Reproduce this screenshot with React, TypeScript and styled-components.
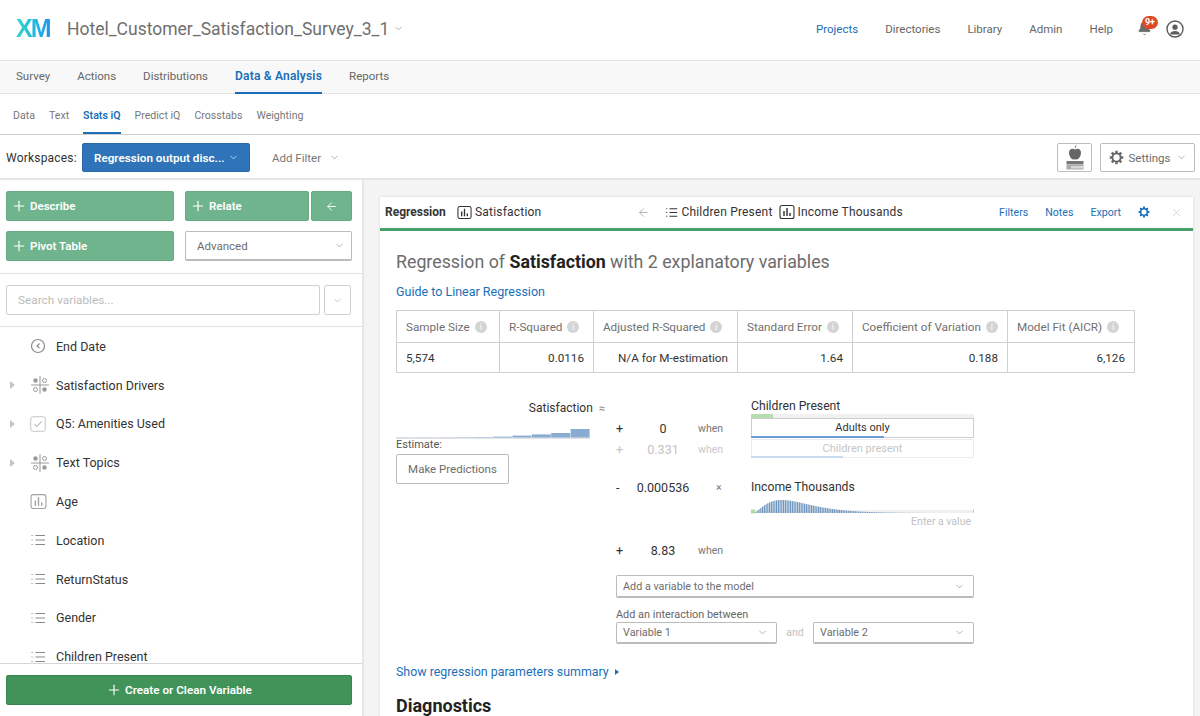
import styled, { createGlobalStyle } from 'styled-components';
import { ChevronDown, Plus, X, ArrowLeft, Bell } from 'lucide-react';

const GlobalStyle = createGlobalStyle`
  html, body { margin: 0; height: 100%; overflow: hidden; background: #fff; }
  body { font-family: Roboto, "Liberation Sans", sans-serif; font-size: 12px; color: #3a3a3a; }
  * { box-sizing: border-box; }
`;

const Page = styled.div`
  width: 1200px;
  height: 716px;
  display: flex;
  flex-direction: column;
  overflow: hidden;
`;

const TopBar = styled.header`
  height: 60px;
  flex: none;
  display: flex;
  align-items: center;
  padding: 0 16px 3px;
`;

const Logo = styled.span`
  font-family: "Liberation Sans", sans-serif;
  font-weight: 700;
  font-size: 25px;
  letter-spacing: -1.8px;
  width: 51px;
  background: linear-gradient(100deg, #33dcc4 0%, #22a9e8 50%, #1b62dc 100%);
  -webkit-background-clip: text;
  background-clip: text;
  color: transparent;
`;

const SurveyTitle = styled.span`
  font-size: 17.5px;
  color: #6f6f6f;
  display: flex;
  align-items: center;
  gap: 4px;
`;

const TopNav = styled.nav`
  margin-left: auto;
  display: flex;
  align-items: center;
  gap: 27px;
`;

const TopLink = styled.a<{ $active?: boolean }>`
  font-size: 11.5px;
  color: ${(p) => (p.$active ? '#1a6fb8' : '#666')};
`;

const BellWrap = styled.span`
  position: relative;
  display: block;
  width: 16px;
  height: 16px;
  color: #6b6b6b;
`;

const Badge = styled.span`
  position: absolute;
  left: 5px;
  top: -5px;
  width: 16px;
  height: 13px;
  border-radius: 7px;
  background: #dd4b26;
  color: #fff;
  font-size: 9px;
  font-weight: 700;
  line-height: 13px;
  text-align: center;
`;

const UserGroup = styled.div`
  display: flex;
  align-items: center;
  gap: 13px;
  margin-left: -3px;
`;

const MainTabs = styled.nav`
  height: 34px;
  flex: none;
  display: flex;
  gap: 27px;
  padding: 0 16px;
  background: #f8f8f8;
  border-top: 1px solid #e4e4e4;
  border-bottom: 1px solid #e4e4e4;
`;

const MainTab = styled.a<{ $active?: boolean }>`
  line-height: 31px;
  height: 33px;
  font-size: ${(p) => (p.$active ? '12px' : '11.5px')};
  letter-spacing: ${(p) => (p.$active ? '0.2px' : '0')};
  color: ${(p) => (p.$active ? '#1a6fb8' : '#666')};
  font-weight: ${(p) => (p.$active ? 600 : 400)};
  border-bottom: 2px solid ${(p) => (p.$active ? '#1a6fb8' : 'transparent')};
`;

const SubTabs = styled.nav`
  height: 41px;
  flex: none;
  display: flex;
  gap: 14px;
  padding: 0 13px;
  border-bottom: 1px solid #cfcfcf;
`;

const SubTab = styled.a<{ $active?: boolean }>`
  font-size: 10.6px;
  line-height: 44px;
  height: 40px;
  color: ${(p) => (p.$active ? '#1a6fb8' : '#777')};
  font-weight: ${(p) => (p.$active ? 600 : 400)};
  border-bottom: 2px solid ${(p) => (p.$active ? '#1a6fb8' : 'transparent')};
`;

const Toolbar = styled.div`
  height: 45px;
  flex: none;
  display: flex;
  align-items: center;
  padding: 2px 5px 0 6px;
  border-bottom: 2px solid #e6e6e6;
`;

const WorkspaceLabel = styled.span`
  color: #333;
  width: 76px;
  letter-spacing: 0.2px;
`;

const WorkspaceButton = styled.button`
  width: 168px;
  height: 29px;
  border: 1px solid #2a69a8;
  border-radius: 2px;
  background: #2f74b8;
  color: #fff;
  font: 600 11.7px Roboto, sans-serif;
  white-space: nowrap;
  display: flex;
  align-items: center;
  justify-content: space-between;
  padding: 0 10px 0 11px;
`;

const FilterLink = styled.span`
  margin-left: 22px;
  font-size: 11.5px;
  color: #777;
  display: flex;
  align-items: center;
  gap: 8px;
`;

const ToolbarRight = styled.div`
  margin-left: auto;
  display: flex;
  gap: 8px;
`;

const OutlineButton = styled.button<{ $width: number }>`
  width: ${(p) => p.$width}px;
  height: 29px;
  border: 1px solid #bdbdbd;
  border-radius: 2px;
  background: #fff;
  color: #6c6c6c;
  font: 400 11.5px Roboto, sans-serif;
  display: flex;
  align-items: center;
  justify-content: center;
  gap: 5px;
  padding: 0;
`;

const Body = styled.div`
  flex: 1;
  min-height: 0;
  display: flex;
`;

const Sidebar = styled.aside`
  width: 364px;
  flex: none;
  display: flex;
  flex-direction: column;
  border-right: 2px solid #e6e6e6;
`;

const ToolGrid = styled.div`
  display: grid;
  grid-template-columns: 168px 167px;
  grid-auto-rows: 30px;
  gap: 10px 11px;
  padding: 11px 6px 12px;
  border-bottom: 1px solid #e2e2e2;
`;

const GreenButton = styled.button`
  background: #70b48d;
  border: 1px solid #65ab83;
  border-radius: 2px;
  color: #fff;
  font: 600 11.5px Roboto, sans-serif;
  display: flex;
  align-items: center;
  gap: 3px;
  padding: 0 0 0 4px;
  min-width: 0;
`;

const RelateGroup = styled.div`
  display: grid;
  grid-template-columns: 124px 1fr;
  gap: 2px;
`;

const ArrowButton = styled(GreenButton)`
  justify-content: center;
  padding: 0;
`;

const SelectBox = styled.div`
  height: 100%;
  border: 1px solid #bcbcbc;
  border-bottom-width: 2px;
  border-radius: 2px;
  background: #fff;
  color: #6d6d6d;
  font-size: 11.5px;
  display: flex;
  align-items: center;
  justify-content: space-between;
  padding: 0 6px 0 11px;
`;

const SearchRow = styled.div`
  display: flex;
  gap: 4px;
  height: 53px;
  padding: 11px 11px 11px 6px;
  border-bottom: 1px solid #e2e2e2;
`;

const SearchInput = styled.div`
  flex: 1;
  border: 1px solid #cfcfcf;
  border-radius: 2px;
  color: #bcbcbc;
  font-size: 11.8px;
  line-height: 29px;
  padding-left: 11px;
`;

const SearchToggle = styled.div`
  width: 27px;
  border: 1px solid #cfcfcf;
  border-radius: 2px;
  color: #aaa;
  display: flex;
  align-items: center;
  justify-content: center;
`;

const VariableList = styled.ul`
  flex: 1;
  min-height: 0;
  overflow: hidden;
  list-style: none;
  margin: 0;
  padding: 0;
  border-bottom: 1px solid #d6d6d6;
`;

const VariableRow = styled.li`
  height: 38.8px;
  display: grid;
  grid-template-columns: 30px 26px 1fr;
  align-items: center;
  color: #333;
  font-size: 12.5px;
`;

const Caret = styled.span`
  justify-self: center;
  margin-left: -6px;
  width: 0;
  height: 0;
  border-left: 5px solid #c4c4c4;
  border-top: 4px solid transparent;
  border-bottom: 4px solid transparent;
`;

const IconSlot = styled.span`
  display: flex;
  align-items: center;
  color: #8a8a8a;
`;

const SidebarFooter = styled.div`
  flex: none;
  height: 52px;
  padding: 11px 10px 0 6px;
`;

const CreateButton = styled.button`
  width: 346px;
  height: 30px;
  background: #41935a;
  border: 1px solid #398550;
  border-radius: 2px;
  color: #fff;
  font: 600 11.7px Roboto, sans-serif;
  display: flex;
  align-items: center;
  justify-content: center;
  gap: 3px;
`;

const Workspace = styled.main`
  flex: 1;
  min-width: 0;
  background: #f4f4f4;
  padding: 17px 7px 0 16px;
`;

const Card = styled.section`
  background: #fff;
  height: 620px;
  box-shadow: 0 0 3px rgba(0, 0, 0, 0.12);
`;

const CardHeader = styled.div`
  height: 34px;
  display: flex;
  align-items: center;
  padding: 0 10px 1px 5px;
  border-bottom: 3px solid #4a9e68;
  color: #333;
  letter-spacing: 0.2px;
`;

const CardType = styled.strong`
  font-weight: 700;
  font-size: 12px;
  letter-spacing: 0;
  width: 72px;
`;

const Chip = styled.span`
  display: flex;
  align-items: center;
  gap: 3px;
  margin-right: 6px;
`;

const BackArrow = styled.span`
  color: #777;
  display: flex;
  margin: 0 15px 0 90px;
`;

const CardActions = styled.div`
  margin-left: auto;
  display: flex;
  align-items: center;
  gap: 17px;
  color: #1a6fb8;
  font-size: 10.6px;
  letter-spacing: 0;
`;

const CloseIcon = styled.span`
  color: #c9c9c9;
  display: flex;
  margin-left: 3px;
`;

const CardBody = styled.div`
  padding: 20px 16px 0;
`;

const ResultTitle = styled.h2`
  margin: 0;
  font-size: 17.8px;
  font-weight: 400;
  line-height: 22px;
  color: #6c6c6c;
  strong { color: #222; font-weight: 700; }
`;

const BlueLink = styled.a`
  display: block;
  color: #1a6fb8;
  font-size: 12.5px;
  line-height: 16px;
`;

const GuideLink = styled(BlueLink)`
  margin-top: 11px;
`;

const StatsTable = styled.table`
  margin-top: 10px;
  border-collapse: collapse;
  table-layout: fixed;
  width: 739px;
  th, td { border: 1px solid #cfcfcf; padding: 0 9px; font-size: 11.7px; white-space: nowrap; }
  th { height: 32px; font-weight: 400; color: #707070; text-align: left; }
  td { height: 30px; color: #333; text-align: right; }
  td:first-child { text-align: left; }
`;

const InfoDot = styled.span`
  display: inline-block;
  width: 12px;
  height: 12px;
  margin-left: 5px;
  border-radius: 50%;
  background: #d4d4d4;
  color: #fff;
  font-size: 9px;
  line-height: 12px;
  text-align: center;
  vertical-align: 1px;
`;

const Equation = styled.div`
  display: flex;
  margin-top: 25px;
`;

const OutcomeColumn = styled.div`
  width: 220px;
  flex: none;
  padding-top: 3px;
`;

const OutcomeLabel = styled.div`
  display: flex;
  justify-content: flex-end;
  align-items: center;
  gap: 6px;
  width: 209px;
  line-height: 15px;
  color: #333;
  span { color: #888; font-size: 11px; }
`;

const EstimateLabel = styled.div`
  font-size: 11px;
  line-height: 11px;
  color: #555;
`;

const PredictButton = styled(OutlineButton)`
  height: 30px;
  margin-top: 4px;
  border-color: #bbb;
`;

const ModelColumn = styled.div`
  width: 358px;
  flex: none;
`;

const TermGrid = styled.div`
  display: grid;
  grid-template-columns: 18px 58px 59px 223px;
  grid-template-rows: 20px 21px 20px 18px 20px 19px 24px 20px;
  align-items: center;
`;

const TermSign = styled.span<{ $faded?: boolean }>`
  grid-column: 1;
  font-size: 12.5px;
  color: ${(p) => (p.$faded ? '#c4c4c4' : '#333')};
`;

const TermValue = styled.span<{ $faded?: boolean }>`
  grid-column: 2;
  text-align: center;
  font-size: 12.5px;
  color: ${(p) => (p.$faded ? '#c4c4c4' : '#333')};
`;

const TermWhen = styled.span<{ $faded?: boolean }>`
  grid-column: 3;
  padding-left: 6px;
  font-size: 10.5px;
  color: ${(p) => (p.$faded ? '#c8c8c8' : '#777')};
`;

const Times = styled(TermWhen)`
  padding-left: 24px;
`;

const VarTitle = styled.div`
  grid-column: 4;
  color: #333;
  font-size: 12.2px;
  line-height: 15px;
`;

const PresentHead = styled.div`
  grid-column: 4;
  align-self: stretch;
  display: flex;
  flex-direction: column;
  justify-content: flex-end;
`;

const LevelStrip = styled.div`
  height: 4px;
  background: #f1f1f1;
  div { height: 100%; width: 22px; background: #b7dcae; }
`;

const LevelBox = styled.div<{ $faded?: boolean }>`
  grid-column: 4;
  align-self: stretch;
  position: relative;
  margin-bottom: 1px;
  border: 1px solid ${(p) => (p.$faded ? '#ececec' : '#cdcdcd')};
  color: ${(p) => (p.$faded ? '#c6c6c6' : '#333')};
  font-size: 11px;
  line-height: 18px;
  text-align: center;
`;

const LevelBar = styled.span<{ $faded?: boolean }>`
  position: absolute;
  left: -1px;
  bottom: -1px;
  height: 2px;
  background: ${(p) => (p.$faded ? '#c9dbee' : '#6b9fd4')};
`;

const EnterValue = styled.div`
  grid-column: 4;
  align-self: start;
  line-height: 11px;
  text-align: right;
  padding-right: 3px;
  color: #c2c2c2;
  font-size: 10.5px;
`;

const AddVariable = styled.div`
  height: 23px;
  margin-top: 15px;
`;

const InteractionLabel = styled.div`
  margin-top: 10px;
  font-size: 10.9px;
  line-height: 13px;
  color: #666;
`;

const InteractionRow = styled.div`
  display: grid;
  grid-template-columns: 161px 36px 161px;
  height: 22px;
  margin-top: 1px;
`;

const AndLabel = styled.span`
  text-align: center;
  line-height: 22px;
  color: #c0c0c0;
  font-size: 10.5px;
`;

const SmallSelect = styled(SelectBox)`
  padding: 0 8px 0 6px;
  font-size: 10.8px;
`;

const SummaryLink = styled(BlueLink)`
  margin-top: 20px;
  font-size: 12.4px;
  display: flex;
  align-items: center;
  gap: 6px;
`;

const SummaryCaret = styled.span`
  width: 0;
  height: 0;
  border-left: 4px solid #1a6fb8;
  border-top: 3px solid transparent;
  border-bottom: 3px solid transparent;
`;

const SectionTitle = styled.h3`
  margin: 16px 0 0;
  font-size: 18px;
  line-height: 20px;
  font-weight: 700;
  color: #222;
`;

function Chevron({ size = 11, color = 'currentColor' }: { size?: number; color?: string }) {
  return <ChevronDown size={size} color={color} strokeWidth={1.4} />;
}

function ListIcon({ size = 16, color = '#8a8a8a', weight = 1.1 }) {
  return (
    <svg width={size} height={size} viewBox="0 0 16 16" fill="none" stroke={color} strokeWidth={weight}>
      <path d="M5.5 3.5H15M5.5 8H15M5.5 12.5H15" />
      <path d="M1.5 3.5h2M1.5 8h2M1.5 12.5h2" strokeDasharray="1 0.8" />
    </svg>
  );
}

function BarsIcon({ color = '#8a8a8a', size = 17, weight = 1 }) {
  return (
    <svg width={size} height={size} viewBox="0 0 16 16" fill="none" stroke={color} strokeWidth={weight}>
      <rect x="1" y="1.5" width="14" height="13" rx="2" />
      <path d="M5 12V7M8 12V4M11 12V9" strokeWidth={weight * 1.3} />
    </svg>
  );
}

function ClockIcon() {
  return (
    <svg width="16" height="16" viewBox="0 0 16 16" fill="none" stroke="#8a8a8a" strokeWidth="1.2">
      <circle cx="8" cy="8" r="6.5" />
      <path d="M9.5 5.5 7 8l2.5 2" />
    </svg>
  );
}

function TopicIcon() {
  return (
    <svg width="20" height="20" viewBox="0 0 20 20" fill="none" stroke="#9a9a9a" strokeWidth="1">
      <path d="M10 1v18M1 10h18" />
      <circle cx="5.5" cy="5.5" r="2.2" fill="#9a9a9a" stroke="none" />
      <circle cx="14.5" cy="5.5" r="2" />
      <circle cx="5.5" cy="14.5" r="2" />
      <circle cx="14.5" cy="14.5" r="2.2" fill="#9a9a9a" stroke="none" />
    </svg>
  );
}

function CheckIcon() {
  return (
    <svg width="16" height="16" viewBox="0 0 16 16" fill="none" stroke="#9a9a9a" strokeWidth="1">
      <rect x="0.75" y="0.75" width="14.5" height="14.5" rx="2" stroke="#c4c4c4" />
      <path d="M4.5 8.2 7 10.5 11.5 5.5" />
    </svg>
  );
}

function Gear({ color, size }: { color: string; size: number }) {
  return (
    <svg width={size} height={size} viewBox="0 0 16 16" fill="none" stroke={color}>
      <circle cx="8" cy="8" r="4.4" strokeWidth="2" />
      {[0, 45, 90, 135, 180, 225, 270, 315].map((a) => (
        <path key={a} d="M8 0.8V3.4" strokeWidth="2.6" transform={`rotate(${a} 8 8)`} />
      ))}
    </svg>
  );
}

function UserIcon() {
  return (
    <svg width="18" height="18" viewBox="0 0 18 18" fill="none" stroke="#5c5c5c" strokeWidth="1.4">
      <circle cx="9" cy="9" r="8" />
      <circle cx="9" cy="7.2" r="2.6" fill="#5c5c5c" stroke="none" />
      <path d="M3.8 14.6c1-2.8 3-3.6 5.2-3.6s4.2.8 5.2 3.6z" fill="#5c5c5c" stroke="none" />
    </svg>
  );
}

function AppleBooks() {
  return (
    <svg width="18" height="26" viewBox="0 0 18 26">
      <path d="M9 3 10 0.5" stroke="#666" strokeWidth="0.9" fill="none" />
      <path d="M9 4.5C6 2.8 3 4.4 3 7.8c0 3.4 2.5 6.7 4.5 6.7.7 0 1-.3 1.500-.3s.8.3 1.500.3c2 0 4.500-3.300 4.500-6.700 0-3.400-3-5-6-3.300z" fill="#666" />
      <rect x="0.5" y="16" width="17" height="3.5" fill="#777" />
      <rect x="0.5" y="20" width="17" height="4.5" fill="#aaa" />
      <rect x="5" y="21" width="12.5" height="2.5" fill="#d8d8d8" />
    </svg>
  );
}

const outcomeBars = [0.3, 0.3, 0.3, 0.4, 0.5, 1, 2, 3.2, 4.6, 8.6];

function OutcomeHistogram() {
  return (
    <svg width="194" height="11" viewBox="0 0 194 11" style={{ display: 'block', marginTop: 12 }}>
      <rect x="0" y="9.6" width="194" height="1.4" fill="#e4e4e4" />
      {outcomeBars.map((h, i) => (
        <rect key={i} x={i * 19.4} y={9.6 - h} width="19" height={h} fill="#8aabd2" />
      ))}
    </svg>
  );
}

function IncomeHistogram() {
  const bars = Array.from({ length: 100 }, (_, i) => {
    const t = i + 1;
    const v = (t / 16) * Math.exp(1 - t / 16);
    return 13 * Math.pow(v, 1.5);
  });
  return (
    <svg width="223" height="15" viewBox="0 0 223 15" style={{ display: 'block', gridColumn: 4 }}>
      <rect x="0" y="11" width="223" height="3" fill="#f0f0f0" />
      {bars.map((h, i) => (
        <rect key={i} x={4 + i * 1.75} y={14 - h} width="1.2" height={h} fill="#6f94bd" />
      ))}
      <rect x="0" y="10.5" width="4" height="4" fill="#b2dbaa" />
      <rect x="222" y="10" width="1" height="4" fill="#ccc" />
    </svg>
  );
}

function Variable({ name, caret, icon }: { name: string; caret?: boolean; icon: React.ReactNode }) {
  return (
    <VariableRow>
      {caret ? <Caret /> : <span />}
      <IconSlot>{icon}</IconSlot>
      <span>{name}</span>
    </VariableRow>
  );
}

function Info() {
  return <InfoDot>i</InfoDot>;
}

export default function App() {
  return (
    <Page>
      <GlobalStyle />
      <TopBar>
        <Logo>XM</Logo>
        <SurveyTitle>
          Hotel_Customer_Satisfaction_Survey_3_1 <Chevron color="#888" />
        </SurveyTitle>
        <TopNav>
          <TopLink $active>Projects</TopLink>
          <TopLink>Directories</TopLink>
          <TopLink>Library</TopLink>
          <TopLink>Admin</TopLink>
          <TopLink>Help</TopLink>
          <UserGroup>
            <BellWrap>
              <Bell size={15} fill="currentColor" strokeWidth={1} />
              <Badge>9+</Badge>
            </BellWrap>
            <UserIcon />
          </UserGroup>
        </TopNav>
      </TopBar>

      <MainTabs>
        <MainTab>Survey</MainTab>
        <MainTab>Actions</MainTab>
        <MainTab>Distributions</MainTab>
        <MainTab $active>Data &amp; Analysis</MainTab>
        <MainTab>Reports</MainTab>
      </MainTabs>

      <SubTabs>
        <SubTab>Data</SubTab>
        <SubTab>Text</SubTab>
        <SubTab $active>Stats iQ</SubTab>
        <SubTab>Predict iQ</SubTab>
        <SubTab>Crosstabs</SubTab>
        <SubTab>Weighting</SubTab>
      </SubTabs>

      <Toolbar>
        <WorkspaceLabel>Workspaces:</WorkspaceLabel>
        <WorkspaceButton>
          Regression output disc... <Chevron color="#fff" />
        </WorkspaceButton>
        <FilterLink>
          Add Filter <Chevron color="#888" />
        </FilterLink>
        <ToolbarRight>
          <OutlineButton $width={35}>
            <AppleBooks />
          </OutlineButton>
          <OutlineButton $width={95}>
            <Gear color="#666" size={15} />
            Settings
            <Chevron color="#888" />
          </OutlineButton>
        </ToolbarRight>
      </Toolbar>

      <Body>
        <Sidebar>
          <ToolGrid>
            <GreenButton>
              <Plus size={16} strokeWidth={1.7} /> Describe
            </GreenButton>
            <RelateGroup>
              <GreenButton>
                <Plus size={16} strokeWidth={1.7} /> Relate
              </GreenButton>
              <ArrowButton>
                <ArrowLeft size={13} strokeWidth={1.7} />
              </ArrowButton>
            </RelateGroup>
            <GreenButton>
              <Plus size={16} strokeWidth={1.7} /> Pivot Table
            </GreenButton>
            <SelectBox>
              Advanced <Chevron color="#888" />
            </SelectBox>
          </ToolGrid>
          <SearchRow>
            <SearchInput>Search variables...</SearchInput>
            <SearchToggle>
              <Chevron />
            </SearchToggle>
          </SearchRow>
          <VariableList>
            <Variable name="End Date" icon={<ClockIcon />} />
            <Variable name="Satisfaction Drivers" caret icon={<TopicIcon />} />
            <Variable name="Q5: Amenities Used" caret icon={<CheckIcon />} />
            <Variable name="Text Topics" caret icon={<TopicIcon />} />
            <Variable name="Age" icon={<BarsIcon color="#a0a0a0" />} />
            <Variable name="Location" icon={<ListIcon />} />
            <Variable name="ReturnStatus" icon={<ListIcon />} />
            <Variable name="Gender" icon={<ListIcon />} />
            <Variable name="Children Present" icon={<ListIcon />} />
          </VariableList>
          <SidebarFooter>
            <CreateButton>
              <Plus size={16} strokeWidth={1.7} /> Create or Clean Variable
            </CreateButton>
          </SidebarFooter>
        </Sidebar>

        <Workspace>
          <Card>
            <CardHeader>
              <CardType>Regression</CardType>
              <Chip>
                <BarsIcon color="#333" size={15} weight={1.1} /> Satisfaction
              </Chip>
              <BackArrow>
                <ArrowLeft size={13} strokeWidth={1} />
              </BackArrow>
              <Chip>
                <ListIcon color="#333" size={13} weight={1.3} /> Children Present
              </Chip>
              <Chip>
                <BarsIcon color="#333" size={16} weight={1.1} /> Income Thousands
              </Chip>
              <CardActions>
                <span>Filters</span>
                <span>Notes</span>
                <span>Export</span>
                <Gear color="#1a6fb8" size={12} />
                <CloseIcon>
                  <X size={13} strokeWidth={1.3} />
                </CloseIcon>
              </CardActions>
            </CardHeader>
            <CardBody>
              <ResultTitle>
                Regression of <strong>Satisfaction</strong> with 2 explanatory variables
              </ResultTitle>
              <GuideLink>Guide to Linear Regression</GuideLink>
              <StatsTable>
                <colgroup>
                  <col width="103" />
                  <col width="94" />
                  <col width="144" />
                  <col width="115" />
                  <col width="155" />
                  <col width="127" />
                </colgroup>
                <thead>
                  <tr>
                    <th>Sample Size<Info /></th>
                    <th>R-Squared<Info /></th>
                    <th>Adjusted R-Squared<Info /></th>
                    <th>Standard Error<Info /></th>
                    <th>Coefficient of Variation<Info /></th>
                    <th>Model Fit (AICR)<Info /></th>
                  </tr>
                </thead>
                <tbody>
                  <tr>
                    <td>5,574</td>
                    <td>0.0116</td>
                    <td>N/A for M-estimation</td>
                    <td>1.64</td>
                    <td>0.188</td>
                    <td>6,126</td>
                  </tr>
                </tbody>
              </StatsTable>

              <Equation>
                <OutcomeColumn>
                  <OutcomeLabel>
                    Satisfaction <span>≈</span>
                  </OutcomeLabel>
                  <OutcomeHistogram />
                  <EstimateLabel>Estimate:</EstimateLabel>
                  <PredictButton $width={113}>Make Predictions</PredictButton>
                </OutcomeColumn>
                <ModelColumn>
                  <TermGrid>
                    <PresentHead>
                      <VarTitle>Children Present</VarTitle>
                      <LevelStrip>
                        <div />
                      </LevelStrip>
                    </PresentHead>

                    <TermSign>+</TermSign>
                    <TermValue>0</TermValue>
                    <TermWhen>when</TermWhen>
                    <LevelBox>
                      Adults only
                      <LevelBar style={{ width: 133 }} />
                    </LevelBox>

                    <TermSign $faded>+</TermSign>
                    <TermValue $faded>0.331</TermValue>
                    <TermWhen $faded>when</TermWhen>
                    <LevelBox $faded>
                      Children present
                      <LevelBar $faded style={{ width: 92 }} />
                    </LevelBox>

                    <span />
                    <span />
                    <span />
                    <span />

                    <TermSign>-</TermSign>
                    <TermValue>0.000536</TermValue>
                    <Times>×</Times>
                    <VarTitle>Income Thousands</VarTitle>

                    <IncomeHistogram />
                    <EnterValue>Enter a value</EnterValue>

                    <TermSign>+</TermSign>
                    <TermValue>8.83</TermValue>
                    <TermWhen>when</TermWhen>
                  </TermGrid>
                  <AddVariable>
                    <SmallSelect>
                      Add a variable to the model <Chevron color="#888" />
                    </SmallSelect>
                  </AddVariable>
                  <InteractionLabel>Add an interaction between</InteractionLabel>
                  <InteractionRow>
                    <SmallSelect>
                      Variable 1 <Chevron color="#888" />
                    </SmallSelect>
                    <AndLabel>and</AndLabel>
                    <SmallSelect>
                      Variable 2 <Chevron color="#888" />
                    </SmallSelect>
                  </InteractionRow>
                </ModelColumn>
              </Equation>

              <SummaryLink>
                Show regression parameters summary <SummaryCaret />
              </SummaryLink>
              <SectionTitle>Diagnostics</SectionTitle>
            </CardBody>
          </Card>
        </Workspace>
      </Body>
    </Page>
  );
}
